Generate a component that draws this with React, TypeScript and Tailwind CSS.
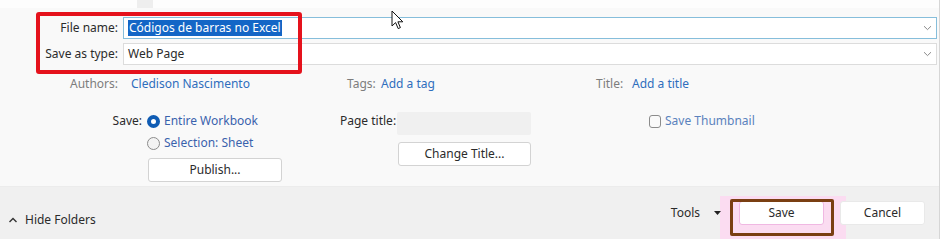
import React from 'react';

function Chevron() {
  return (
    <svg width="9" height="6" viewBox="0 0 9 6" className="shrink-0">
      <path d="M1 1.2 L4.5 4.6 L8 1.2" fill="none" stroke="#8a8a8a" strokeWidth="1" />
    </svg>
  );
}

function Radio({ checked }: { checked?: boolean }) {
  if (checked) {
    return <span className="box-border h-[13px] w-[13px] shrink-0 rounded-full border-[4px] border-[#0f5cb4] bg-white" />;
  }
  return <span className="box-border h-[13px] w-[13px] shrink-0 rounded-full border border-[#8c8c8c] bg-[#f3f3f3]" />;
}

export default function App() {
  return (
    <div className="relative h-[239px] w-[942px] overflow-hidden bg-white font-['Noto_Sans',sans-serif] text-[12px] text-[#2b2b2b]">
      <div className="flex h-full w-[940px] flex-col border-r border-[#d6d6d6] bg-[#f9f9f9]">
        {/* top strip */}
        <div className="flex h-[8px] bg-[#fdfdfd]">
          <div className="ml-[137px] w-[16px] bg-[#eeeeee]" />
        </div>

        {/* file name / type */}
        <div className="mt-[9px] flex flex-col gap-[4px] pr-[2px]">
          <div className="flex h-[22px] items-center">
            <span className="w-[118px] text-right">File name:</span>
            <div className="ml-[5px] flex h-[22px] flex-1 items-center justify-between border border-[#86bedb] bg-white pl-[4px] pr-[4px]">
              <span className="bg-[#1366c6] px-[1px] leading-[16px] text-white">Códigos de barras no Excel</span>
              <Chevron />
            </div>
          </div>
          <div className="flex h-[22px] items-center">
            <span className="w-[118px] text-right">Save as type:</span>
            <div className="ml-[5px] flex h-[22px] flex-1 items-center justify-between border border-[#dcdcdc] bg-white pl-[4px] pr-[4px]">
              <span>Web Page</span>
              <Chevron />
            </div>
          </div>
        </div>

        {/* authors row */}
        <div className="mt-[10px] flex h-[18px] items-center">
          <span className="w-[118px] text-right text-[#7d7d7d]">Authors:</span>
          <span className="ml-[13px] w-[216px] text-[#2f6ebd]">Cledison Nascimento</span>
          <span className="w-[34px] text-[#7d7d7d]">Tags:</span>
          <span className="w-[215px] text-[#2f6ebd]">Add a tag</span>
          <span className="w-[36px] text-[#7d7d7d]">Title:</span>
          <span className="text-[#2f6ebd]">Add a title</span>
        </div>

        {/* options */}
        <div className="mt-[17px] flex items-start">
          <div className="flex items-start">
            <span className="flex h-[22px] w-[142px] items-center justify-end">Save:</span>
            <div className="ml-[5px] flex flex-col">
              <div className="flex h-[22px] items-center gap-[4px]">
                <Radio checked />
                <span className="text-[#3a62ad]">Entire Workbook</span>
              </div>
              <div className="flex h-[22px] items-center gap-[4px]">
                <Radio />
                <span className="text-[#3a62ad]">Selection: Sheet</span>
              </div>
              <button className="ml-[1px] mt-[4px] h-[24px] w-[134px] rounded-[3px] border border-[#d3d3d3] bg-white text-[#2b2b2b]">
                Publish...
              </button>
            </div>
          </div>

          <div className="ml-[58px] flex items-start">
            <span className="flex h-[22px] w-[57px] items-center">Page title:</span>
            <div className="flex flex-col">
              <div className="mt-[2px] h-[23px] w-[134px] rounded-[2px] bg-[#f0f0f0]" />
              <button className="ml-[1px] mt-[7px] h-[24px] w-[133px] rounded-[3px] border border-[#d3d3d3] bg-white text-[#2b2b2b]">
                Change Title...
              </button>
            </div>
          </div>

          <div className="ml-[118px] flex h-[22px] items-center gap-[4px]">
            <span className="box-border h-[13px] w-[12px] rounded-[3px] border border-[#8c8c8c] bg-[#fafafa]" />
            <span className="text-[#5a82bd]">Save Thumbnail</span>
          </div>
        </div>

        {/* bottom bar */}
        <div className="relative mt-auto flex h-[53px] items-center justify-between border-t border-[#ececec] bg-[#f0f0f0] pr-[14px]">
          {/* highlight behind Save */}
          <div className="absolute left-[720px] top-[9px] h-[44px] w-[126px] bg-[#fbdcf1]" />
          <div className="relative mt-[14px] flex items-center">
            <svg width="10" height="6" viewBox="0 0 10 6" className="ml-[8px]">
              <path d="M1.5 5 L5 1.5 L8.5 5" fill="none" stroke="#333" strokeWidth="1.4" />
            </svg>
            <span className="ml-[7px]">Hide Folders</span>
          </div>
          <div className="relative flex items-center">
            <span>Tools</span>
            <svg width="7" height="4" viewBox="0 0 7 4" className="ml-[14px]">
              <path d="M0 0 L7 0 L3.5 4 Z" fill="#222" />
            </svg>
            <button className="ml-[18px] h-[24px] w-[85px] rounded-[3px] border border-[#f0b8e2] bg-white text-[#2b2b2b]">
              Save
            </button>
            <button className="ml-[16px] h-[24px] w-[85px] rounded-[3px] border border-[#e9e9e9] bg-white text-[#2b2b2b]">
              Cancel
            </button>
          </div>
        </div>
      </div>

      {/* brown annotation box */}
      <div className="pointer-events-none absolute left-[730px] top-[199px] h-[37px] w-[104px] rounded-[2px] border-[3px] border-[#7a3f12]" />
      {/* red annotation box */}
      <div className="pointer-events-none absolute left-[36px] top-[12px] h-[62px] w-[266px] rounded-[3px] border-[4px] border-[#e5121c]" />

      {/* mouse cursor */}
      <svg width="14" height="21" viewBox="0 0 14 21" className="pointer-events-none absolute left-[391px] top-[10px]">
        <path d="M1 1 L1 16 L4.6 12.6 L7.2 18.6 L9.4 17.6 L6.9 11.8 L11.8 11.8 Z" fill="#fff" stroke="#111" strokeWidth="1" strokeLinejoin="round" />
      </svg>
    </div>
  );
}
